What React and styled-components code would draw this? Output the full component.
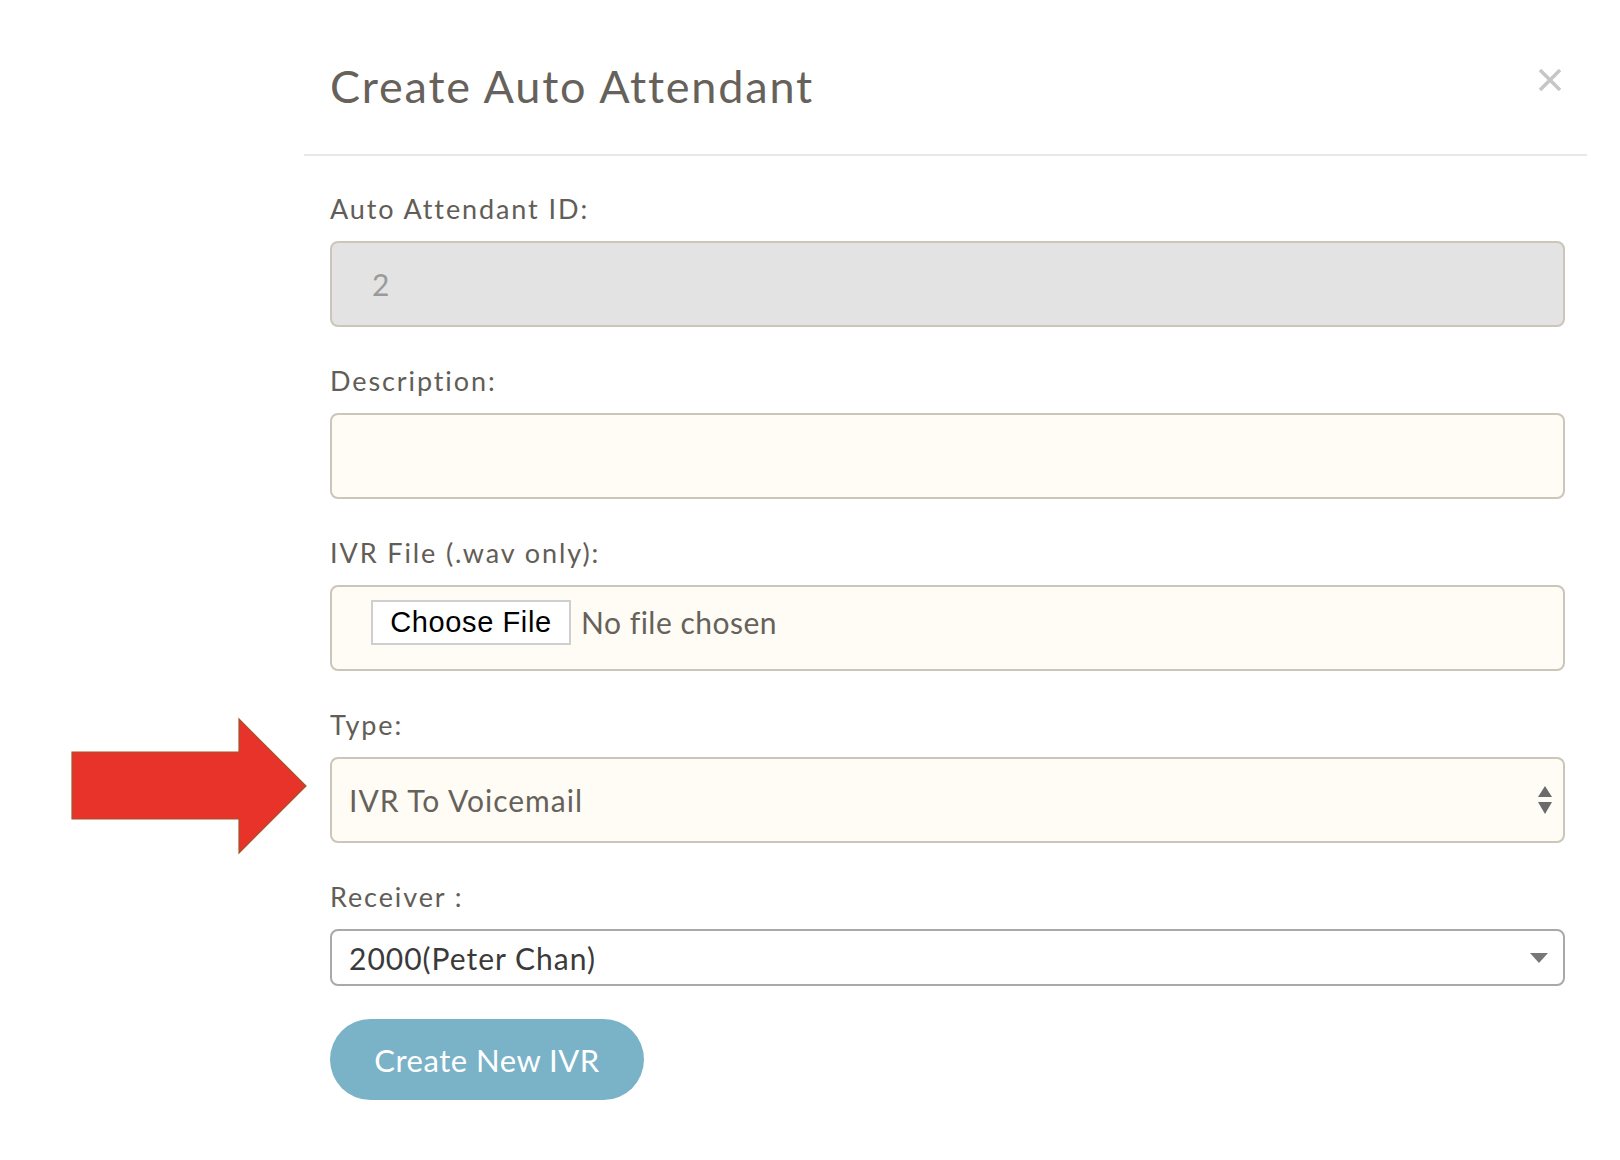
import React from 'react'
import styled, { createGlobalStyle } from 'styled-components'

const GlobalStyle = createGlobalStyle`
    body {
        margin: 0;
        background: #fff;
        font-family: Lato, "Noto Sans", sans-serif;
        color: #66615b;
    }
`

const Page = styled.div`
    position: relative;
    width: 1620px;
    height: 1160px;
    background: #fff;
`

const Modal = styled.div`
    margin-left: 304px;
    width: 1283px;
`

const Header = styled.div`
    display: flex;
    justify-content: space-between;
    align-items: flex-start;
    padding: 59px 25px 41px 26px;
    border-bottom: 2px solid #e8e8e8;
`

const Title = styled.h1`
    margin: 0;
    font-size: 45px;
    line-height: 54px;
    font-weight: 400;
    letter-spacing: 1.8px;
    color: #66615b;
`

const Close = styled.button`
    border: none;
    background: none;
    padding: 0;
    margin-top: 9px;
    cursor: pointer;
    display: flex;
`

const Body = styled.form`
    padding: 37px 22px 40px 26px;
    display: flex;
    flex-direction: column;
`

const Group = styled.div`
    display: flex;
    flex-direction: column;
    margin-bottom: ${p => p.$last ? '33px' : '38px'};
`

const Label = styled.label`
    font-size: 27px;
    line-height: 32px;
    letter-spacing: 1.9px;
    margin-bottom: 16px;
    color: #625d57;
`

const Input = styled.input`
    box-sizing: border-box;
    height: 86px;
    border: 2px solid #ccc5b9;
    border-radius: 8px;
    background: ${p => p.disabled ? '#e3e3e3' : '#fffcf5'};
    color: ${p => p.disabled ? '#9a9a9a' : '#66615b'};
    font-family: Lato, "Noto Sans", sans-serif;
    font-size: 30px;
    letter-spacing: 1px;
    padding: 0 40px;
    outline: none;
`

const FileBox = styled.div`
    box-sizing: border-box;
    height: 86px;
    border: 2px solid #ccc5b9;
    border-radius: 8px;
    background: #fffcf5;
    display: flex;
    align-items: flex-start;
    padding: 13px 0 0 39px;
    gap: 10px;
`

const FileButton = styled.button`
    box-sizing: border-box;
    height: 45px;
    width: 200px;
    background: #fff;
    border: 2px solid #cfcfcf;
    font-family: "Liberation Sans", Arial, sans-serif;
    font-size: 29px;
    letter-spacing: 0.6px;
    color: #000;
    padding: 0;
`

const FileText = styled.span`
    font-size: 30px;
    line-height: 45px;
    letter-spacing: 0.5px;
    color: #66615b;
`

const SelectWrap = styled.div`
    position: relative;
    display: flex;
`

const Select = styled.select`
    flex: 1;
    appearance: none;
    box-sizing: border-box;
    height: ${p => p.$plain ? '57px' : '86px'};
    border: 2px solid ${p => p.$plain ? '#a9a9a9' : '#ccc5b9'};
    border-radius: 8px;
    background: ${p => p.$plain ? '#fff' : '#fffcf5'};
    color: ${p => p.$plain ? '#3a3a3a' : '#66615b'};
    font-family: Lato, "Noto Sans", sans-serif;
    font-size: 30px;
    letter-spacing: 1px;
    padding: 0 17px;
    outline: none;
`

const Caret = styled.span`
    position: absolute;
    right: ${p => p.$right}px;
    top: 50%;
    transform: translateY(-50%);
    display: flex;
    pointer-events: none;
`

const Submit = styled.button`
    align-self: flex-start;
    width: 314px;
    height: 81px;
    border: none;
    border-radius: 41px;
    background: #7ab2c7;
    color: #fff;
    font-family: Lato, "Noto Sans", sans-serif;
    font-size: 31px;
    letter-spacing: 0.5px;
    cursor: pointer;
`

const Arrow = styled.svg`
    position: absolute;
    left: 70px;
    top: 717px;
`

const App = () => {
    return (
        <Page>
            <GlobalStyle />
            <Arrow width="240" height="138" viewBox="0 0 240 138">
                <polygon
                    points="2,35 169,35 169,2 236,69 169,136 169,102 2,102"
                    fill="#e8332a"
                    stroke="#a0552d"
                    strokeWidth="1.2"
                />
            </Arrow>
            <Modal>
                <Header>
                    <Title>Create Auto Attendant</Title>
                    <Close type="button" aria-label="close">
                        <svg width="24" height="24" viewBox="0 0 24 24">
                            <path d="M2 2 L22 22 M22 2 L2 22" stroke="#c6c6c6" strokeWidth="3.5" />
                        </svg>
                    </Close>
                </Header>
                <Body>
                    <Group>
                        <Label>Auto Attendant ID:</Label>
                        <Input disabled value="2" readOnly />
                    </Group>
                    <Group>
                        <Label>Description:</Label>
                        <Input />
                    </Group>
                    <Group>
                        <Label>IVR File (.wav only):</Label>
                        <FileBox>
                            <FileButton type="button">Choose File</FileButton>
                            <FileText>No file chosen</FileText>
                        </FileBox>
                    </Group>
                    <Group>
                        <Label>Type:</Label>
                        <SelectWrap>
                            <Select defaultValue="vm">
                                <option value="vm">IVR To Voicemail</option>
                            </Select>
                            <Caret $right={12}>
                                <svg width="16" height="30" viewBox="0 0 16 30">
                                    <path d="M8 1 L15 12 L1 12 Z M1 17 L15 17 L8 29 Z" fill="#6b6b6b" />
                                </svg>
                            </Caret>
                        </SelectWrap>
                    </Group>
                    <Group $last>
                        <Label>Receiver :</Label>
                        <SelectWrap>
                            <Select $plain defaultValue="2000">
                                <option value="2000">2000(Peter Chan)</option>
                            </Select>
                            <Caret $right={17}>
                                <svg width="18" height="10" viewBox="0 0 18 10">
                                    <path d="M0 0 L18 0 L9 10 Z" fill="#777" />
                                </svg>
                            </Caret>
                        </SelectWrap>
                    </Group>
                    <Submit type="button">Create New IVR</Submit>
                </Body>
            </Modal>
        </Page>
    )
}

export default App
